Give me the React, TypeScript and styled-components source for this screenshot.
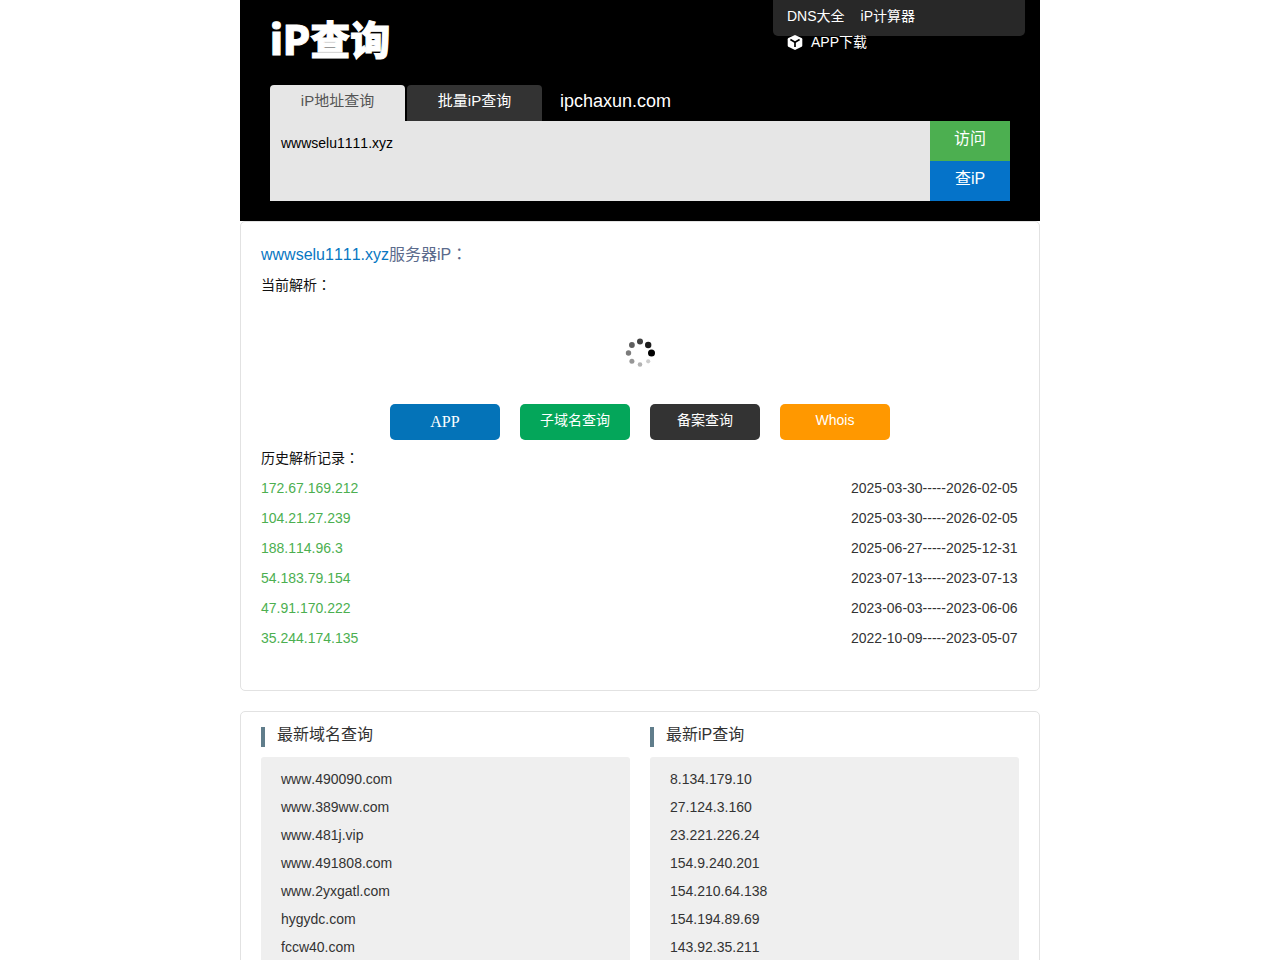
import React from "react";
import styled, { createGlobalStyle } from "styled-components";

const GlobalStyle = createGlobalStyle`
  * { box-sizing: border-box; }
  body {
    margin: 0;
    background: #fff;
    color: #333;
    font: 14px/28px "Liberation Sans", "Noto Sans CJK SC", sans-serif;
    font-kerning: none;
  }
  a { color: inherit; text-decoration: none; }
  ul { list-style: none; margin: 0; padding: 0; }
  h1, h2, p { margin: 0; font-weight: 400; }
  button, textarea { font: inherit; font-kerning: none; border: 0; border-radius: 0; }
`;

const Page = styled.div`
  max-width: 800px;
  margin: 0 auto;
`;

const Header = styled.header`
  background: #000;
  color: #fff;
  padding: 0 30px 20px;
`;

const TopBar = styled.div`
  display: flex;
  justify-content: space-between;
  align-items: flex-start;
  height: 85px;
  margin-right: -15px;
`;

const Logo = styled.a`
  padding-top: 16px;
  font-family: "Noto Sans CJK SC", sans-serif;
  font-size: 40px;
  line-height: 44px;
  font-weight: 900;
  -webkit-text-stroke: 1px #fff;
`;

const Nav = styled.nav`
  display: flex;
  flex-wrap: wrap;
  align-content: flex-start;
  column-gap: 16px;
  width: 252px;
  height: 36px;
  padding: 3px 14px 0;
  background: #282828;
  border-radius: 0 0 5px 5px;
  line-height: 26px;
`;

const AppLink = styled.a`
  display: flex;
  align-items: center;
  gap: 8px;
  flex-basis: 100%;
`;

const Tabs = styled.div`
  display: flex;
  gap: 2px;
`;

const Tab = styled.a<{ $active?: boolean }>`
  width: 135px;
  height: 36px;
  border-radius: 4px 4px 0 0;
  text-align: center;
  font-size: 15px;
  line-height: 32px;
  background: ${(p) => (p.$active ? "#e6e6e6" : "#333")};
  color: ${(p) => (p.$active ? "#555" : "#fff")};
`;

const SiteName = styled.span`
  margin-left: 16px;
  font-size: 18px;
  line-height: 32px;
`;

const SearchForm = styled.form`
  display: flex;
  height: 80px;
`;

const SearchBox = styled.textarea`
  flex: 1;
  min-width: 0;
  padding: 12px 11px;
  background: #e6e6e6;
  color: #000;
  line-height: 20px;
  resize: none;
  outline: none;
`;

const FormButtons = styled.div`
  display: flex;
  flex-direction: column;
  width: 80px;
`;

const FormButton = styled.button<{ $color: string }>`
  height: 40px;
  padding: 0 0 4px;
  background: ${(p) => p.$color};
  color: #fff;
  font-size: 16px;
  line-height: 36px;
  cursor: pointer;
`;

const Card = styled.section`
  border: 1px solid #e2e2e2;
  border-radius: 5px;
  padding: 0 20px;
  margin-bottom: 20px;
`;

const ResultCard = styled(Card)`
  padding-top: 18px;
  padding-bottom: 37px;
`;

const ResultTitle = styled.h1`
  color: #5b6b8c;
  font-size: 16px;
  line-height: 30px;
  a { color: #0877c2; }
`;

const Label = styled.p`
  color: #111;
  line-height: 30px;
`;

const FullColon = styled.span`
  font-family: "Noto Sans CJK TC", sans-serif;
  line-height: 0;
`;

const Loading = styled.div`
  display: flex;
  justify-content: center;
  padding: 37px 0 35px;
`;

const Actions = styled.div`
  display: flex;
  justify-content: center;
  gap: 20px;
  margin-bottom: 3px;
`;

const Action = styled.a<{ $color: string; $serif?: boolean }>`
  width: 110px;
  height: 36px;
  border-radius: 5px;
  background: ${(p) => p.$color};
  color: #fff;
  text-align: center;
  font-family: ${(p) => (p.$serif ? '"Liberation Serif", serif' : "inherit")};
  font-size: ${(p) => (p.$serif ? "16px" : "14px")};
  line-height: ${(p) => (p.$serif ? "36px" : "32px")};
`;

const History = styled.table`
  width: 100%;
  border-collapse: collapse;
  line-height: 30px;
  td { padding: 0; }
  td:first-child { color: #4caf50; }
  td:last-child { width: 168px; white-space: nowrap; }
`;

const RecentCard = styled(Card)`
  display: grid;
  grid-template-columns: 1fr 1fr;
  gap: 20px;
  padding-top: 9px;
  padding-bottom: 20px;
`;

const RecentTitle = styled.h2`
  display: flex;
  align-items: flex-end;
  gap: 12px;
  height: 26px;
  margin-bottom: 10px;
  font-size: 16px;
  line-height: 28px;
  &::before {
    content: "";
    width: 4px;
    height: 20px;
    background: #607d8b;
  }
  span { align-self: flex-start; }
`;

const RecentList = styled.ul`
  padding: 8px 20px;
  background: #efefef;
  border-radius: 3px;
`;

const history = [
  ["172.67.169.212", "2025-03-30-----2026-02-05"],
  ["104.21.27.239", "2025-03-30-----2026-02-05"],
  ["188.114.96.3", "2025-06-27-----2025-12-31"],
  ["54.183.79.154", "2023-07-13-----2023-07-13"],
  ["47.91.170.222", "2023-06-03-----2023-06-06"],
  ["35.244.174.135", "2022-10-09-----2023-05-07"],
];

const recent = [
  {
    title: "最新域名查询",
    items: ["www.490090.com", "www.389ww.com", "www.481j.vip", "www.491808.com", "www.2yxgatl.com", "hygydc.com", "fccw40.com"],
  },
  {
    title: "最新iP查询",
    items: ["8.134.179.10", "27.124.3.160", "23.221.226.24", "154.9.240.201", "154.210.64.138", "154.194.89.69", "143.92.35.211"],
  },
];

const BoxIcon = () => (
  <svg width="16" height="16" viewBox="0 0 16 16" aria-hidden="true">
    <path d="M8 0.9 14.6 4Q15.3 4.4 15.3 5.2V11.6Q15.3 12.4 14.6 12.8L8 16 1.4 12.8Q0.7 12.4 0.7 11.6V5.2Q0.7 4.4 1.4 4Z" fill="#fff" />
    <path d="M3.4 5.6 8 8.2 12.6 5.6M8 8.2V13" fill="none" stroke="#000" strokeWidth="1.7" />
  </svg>
);

const Spinner = () => (
  <svg width="32" height="32" viewBox="0 0 32 32" role="img" aria-label="loading">
    <circle cx="16" cy="4.5" r="3" fill="#414141" />
    <circle cx="24.2" cy="8" r="3.2" fill="#1c1c1c" />
    <circle cx="27.5" cy="16" r="3.5" fill="#000" />
    <circle cx="24.2" cy="24.3" r="2.1" fill="#ccc" />
    <circle cx="16" cy="27.5" r="2.3" fill="#b3b3b3" />
    <circle cx="7.9" cy="24.3" r="2.5" fill="#969696" />
    <circle cx="4.5" cy="16" r="2.7" fill="#7b7b7b" />
    <circle cx="7.9" cy="8" r="2.9" fill="#5e5e5e" />
  </svg>
);

const Colon = () => <FullColon lang="zh-TW">：</FullColon>;

export default function App() {
  return (
    <>
      <GlobalStyle />
      <Page lang="zh-CN">
        <Header>
          <TopBar>
            <Logo href="#">iP查询</Logo>
            <Nav>
              <a href="#dns">DNS大全</a>
              <a href="#calc">iP计算器</a>
              <AppLink href="#app"><BoxIcon />APP下载</AppLink>
            </Nav>
          </TopBar>
          <Tabs>
            <Tab href="#ip" $active>iP地址查询</Tab>
            <Tab href="#batch">批量iP查询</Tab>
            <SiteName>ipchaxun.com</SiteName>
          </Tabs>
          <SearchForm onSubmit={(e) => e.preventDefault()}>
            <SearchBox aria-label="iP地址查询" defaultValue="wwwselu1111.xyz" spellCheck={false} />
            <FormButtons>
              <FormButton type="button" $color="#4caf50">访问</FormButton>
              <FormButton type="submit" $color="#0573c9">查iP</FormButton>
            </FormButtons>
          </SearchForm>
        </Header>
        <main>
          <ResultCard>
            <ResultTitle><a href="#site">wwwselu1111.xyz</a>服务器iP<Colon /></ResultTitle>
            <Label>当前解析<Colon /></Label>
            <Loading><Spinner /></Loading>
            <Actions>
              <Action href="#app" $color="#0473b8" $serif>APP</Action>
              <Action href="#sub" $color="#04a65a">子域名查询</Action>
              <Action href="#beian" $color="#333">备案查询</Action>
              <Action href="#whois" $color="#ff9800">Whois</Action>
            </Actions>
            <Label>历史解析记录<Colon /></Label>
            <History>
              <tbody>
                {history.map(([ip, dates]) => (
                  <tr key={ip}>
                    <td><a href={"#" + ip}>{ip}</a></td>
                    <td>{dates}</td>
                  </tr>
                ))}
              </tbody>
            </History>
          </ResultCard>
          <RecentCard>
            {recent.map(({ title, items }) => (
              <div key={title}>
                <RecentTitle><span>{title}</span></RecentTitle>
                <RecentList>
                  {items.map((item) => (
                    <li key={item}><a href={"#" + item}>{item}</a></li>
                  ))}
                </RecentList>
              </div>
            ))}
          </RecentCard>
        </main>
      </Page>
    </>
  );
}
